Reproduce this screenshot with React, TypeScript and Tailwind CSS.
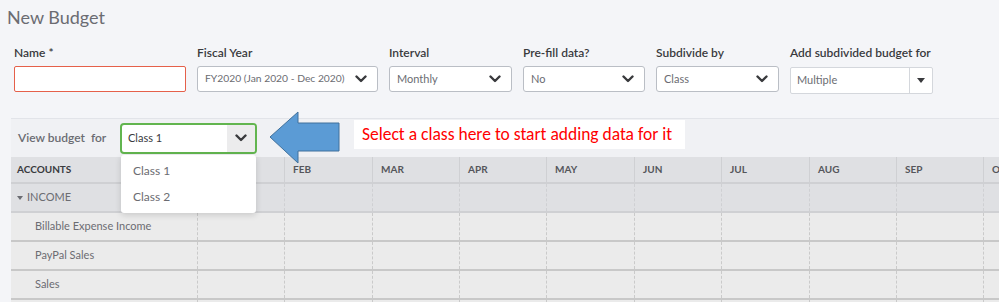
import React from "react";

const font = { fontFamily: "Lato, 'Open Sans', Arial, sans-serif" };

function Chevron() {
  return (
    <svg width="12" height="8" viewBox="0 0 12 8" className="shrink-0">
      <polyline
        points="1.5,1.5 6,6 10.5,1.5"
        fill="none"
        stroke="#393a3d"
        strokeWidth="2.4"
        strokeLinecap="round"
        strokeLinejoin="round"
      />
    </svg>
  );
}

interface SelectProps {
  label: string;
  value: string;
  width: string;
  small?: boolean;
}

function Field({ label, value, width, small }: SelectProps) {
  return (
    <div className={`flex flex-col ${width}`}>
      <div className="h-[26px] flex items-end pb-[4px] text-[12px] font-semibold text-[#393a3d]">
        {label}
      </div>
      <div className="h-[26px] bg-white border border-[#babec5] rounded-[3px] flex items-center justify-between pl-[7px] pr-[10px]">
        <span className={`${small ? "text-[10.3px]" : "text-[11px]"} whitespace-nowrap text-[#6b6c72]`}>
          {value}
        </span>
        <Chevron />
      </div>
    </div>
  );
}

const months = [
  { m: "JAN", w: "w-[87px]" },
  { m: "FEB", w: "w-[88px]" },
  { m: "MAR", w: "w-[87px]" },
  { m: "APR", w: "w-[87px]" },
  { m: "MAY", w: "w-[88px]" },
  { m: "JUN", w: "w-[87px]" },
  { m: "JUL", w: "w-[88px]" },
  { m: "AUG", w: "w-[87px]" },
  { m: "SEP", w: "w-[87px]" },
  { m: "OCT", w: "w-[87px]" },
];

const rows = ["Billable Expense Income", "PayPal Sales", "Sales", ""];

export default function App() {
  return (
    <div
      className="w-[999px] h-[302px] overflow-hidden bg-[#f4f5f8] relative"
      style={font}
    >
      {/* Title */}
      <h1 className="pl-[7px] pt-[6px] h-[28px] text-[18px] leading-[22px] text-[#6b6c72]">
        New Budget
      </h1>

      {/* Form */}
      <div className="flex gap-[11px] pl-[14px] mt-[12px]">
        <div className="flex flex-col w-[172px]">
          <div className="h-[26px] flex items-end pb-[4px] text-[12px] font-semibold text-[#393a3d]">
            Name *
          </div>
          <div className="h-[26px] bg-white border border-[#e5604a] rounded-[2px]" />
        </div>
        <Field label="Fiscal Year" value="FY2020 (Jan 2020 - Dec 2020)" width="w-[181px]" small />
        <Field label="Interval" value="Monthly" width="w-[123px]" />
        <Field label="Pre-fill data?" value="No" width="w-[122px]" />
        <Field label="Subdivide by" value="Class" width="w-[123px]" />
        <div className="flex flex-col w-[143px]">
          <div className="h-[26px] flex items-end pb-[4px] text-[12px] font-semibold text-[#393a3d]">
            Add subdivided budget for
          </div>
          <div className="h-[27px] mt-[1px] bg-white border border-[#d4d7dc] rounded-[2px] flex items-center">
            <span className="flex-1 pl-[6px] text-[11px] text-[#6b6c72]">Multiple</span>
            <div className="w-[23px] h-full border-l border-[#d4d7dc] flex items-center justify-center">
              <span className="w-0 h-0 border-l-[4px] border-r-[4px] border-t-[5px] border-l-transparent border-r-transparent border-t-[#393a3d]" />
            </div>
          </div>
        </div>
      </div>

      {/* Budget panel */}
      <div className="ml-[11px] mt-[24px] bg-[#f0f1f4] border-t border-[#e2e4e9]">
        <div className="h-[38px] flex items-center">
          <span className="pl-[7px] w-[109px] text-[12px] font-semibold text-[#6b6c72]">
            View budget&nbsp; for
          </span>
          <div className="w-[137px] h-[31px] bg-white border-2 border-[#62b54f] rounded-[4px] flex items-center overflow-hidden">
            <span className="flex-1 pl-[6px] text-[11px] text-[#393a3d]">Class 1</span>
            <div className="w-[28px] h-full bg-[#ececed] flex items-center justify-center">
              <Chevron />
            </div>
          </div>
        </div>

        {/* Table */}
        <div className="w-[1100px]">
          <div className="flex h-[27px] bg-[#dfe0e3] border-b-2 border-[#cfd0d3]">
            <div className="w-[187px] pl-[6px] flex items-center text-[10px] font-bold text-[#393a3d] border-r border-[#cfd0d3]">
              ACCOUNTS
            </div>
            {months.map(({ m, w }) => (
              <div
                key={m}
                className={`${w} pl-[8px] flex items-center text-[10px] font-bold text-[#55565b] border-r border-[#cfd0d3]`}
              >
                {m}
              </div>
            ))}
          </div>
          <div className="flex h-[29px] bg-[#dfe0e3] border-b-2 border-[#cfd0d3]">
            <div className="w-[187px] pl-[6px] flex items-center gap-[4px] text-[11px] text-[#6b6c72] border-r border-dashed border-[#cfd0d3]">
              <span className="w-0 h-0 border-l-[3px] border-r-[3px] border-t-[4px] border-l-transparent border-r-transparent border-t-[#6b6c72]" />
              INCOME
            </div>
            {months.map(({ m, w }) => (
              <div key={m} className={`${w} border-r border-dashed border-[#cfd0d3]`} />
            ))}
          </div>
          {rows.map((r, i) => (
            <div key={i} className="flex h-[29px] bg-[#ebebeb] border-b-2 border-[#c8c8c8]">
              <div className="w-[187px] pl-[24px] flex items-center text-[11px] text-[#6b6c72] border-r border-dashed border-[#cacaca]">
                {r}
              </div>
              {months.map(({ m, w }) => (
                <div key={m} className={`${w} border-r border-dashed border-[#cacaca]`} />
              ))}
            </div>
          ))}
        </div>
      </div>

      {/* Dropdown menu */}
      <div className="absolute left-[121px] top-[155px] w-[135px] h-[58px] bg-white rounded-[3px] shadow-[0_2px_6px_rgba(0,0,0,0.15)] flex flex-col justify-center gap-[8px] pl-[12px] text-[12px] text-[#6b6c72]">
        <span>Class 1</span>
        <span>Class 2</span>
      </div>

      {/* Callout arrow */}
      <svg className="absolute left-[268px] top-[110px]" width="74" height="56" viewBox="0 0 74 56">
        <polygon
          points="2,27 30,2 30,13 71,13 71,41 30,41 30,53"
          fill="#5b9bd5"
          stroke="#41719c"
          strokeWidth="1"
        />
      </svg>

      {/* Callout text */}
      <div
        className="absolute left-[354px] top-[120px] w-[331px] h-[29px] bg-white flex items-center pl-[8px] text-[17.5px] text-[#ff0000]"
        style={{ fontFamily: "Carlito, 'Open Sans', Arial, sans-serif" }}
      >
        Select a class here to start adding data for it
      </div>
    </div>
  );
}
